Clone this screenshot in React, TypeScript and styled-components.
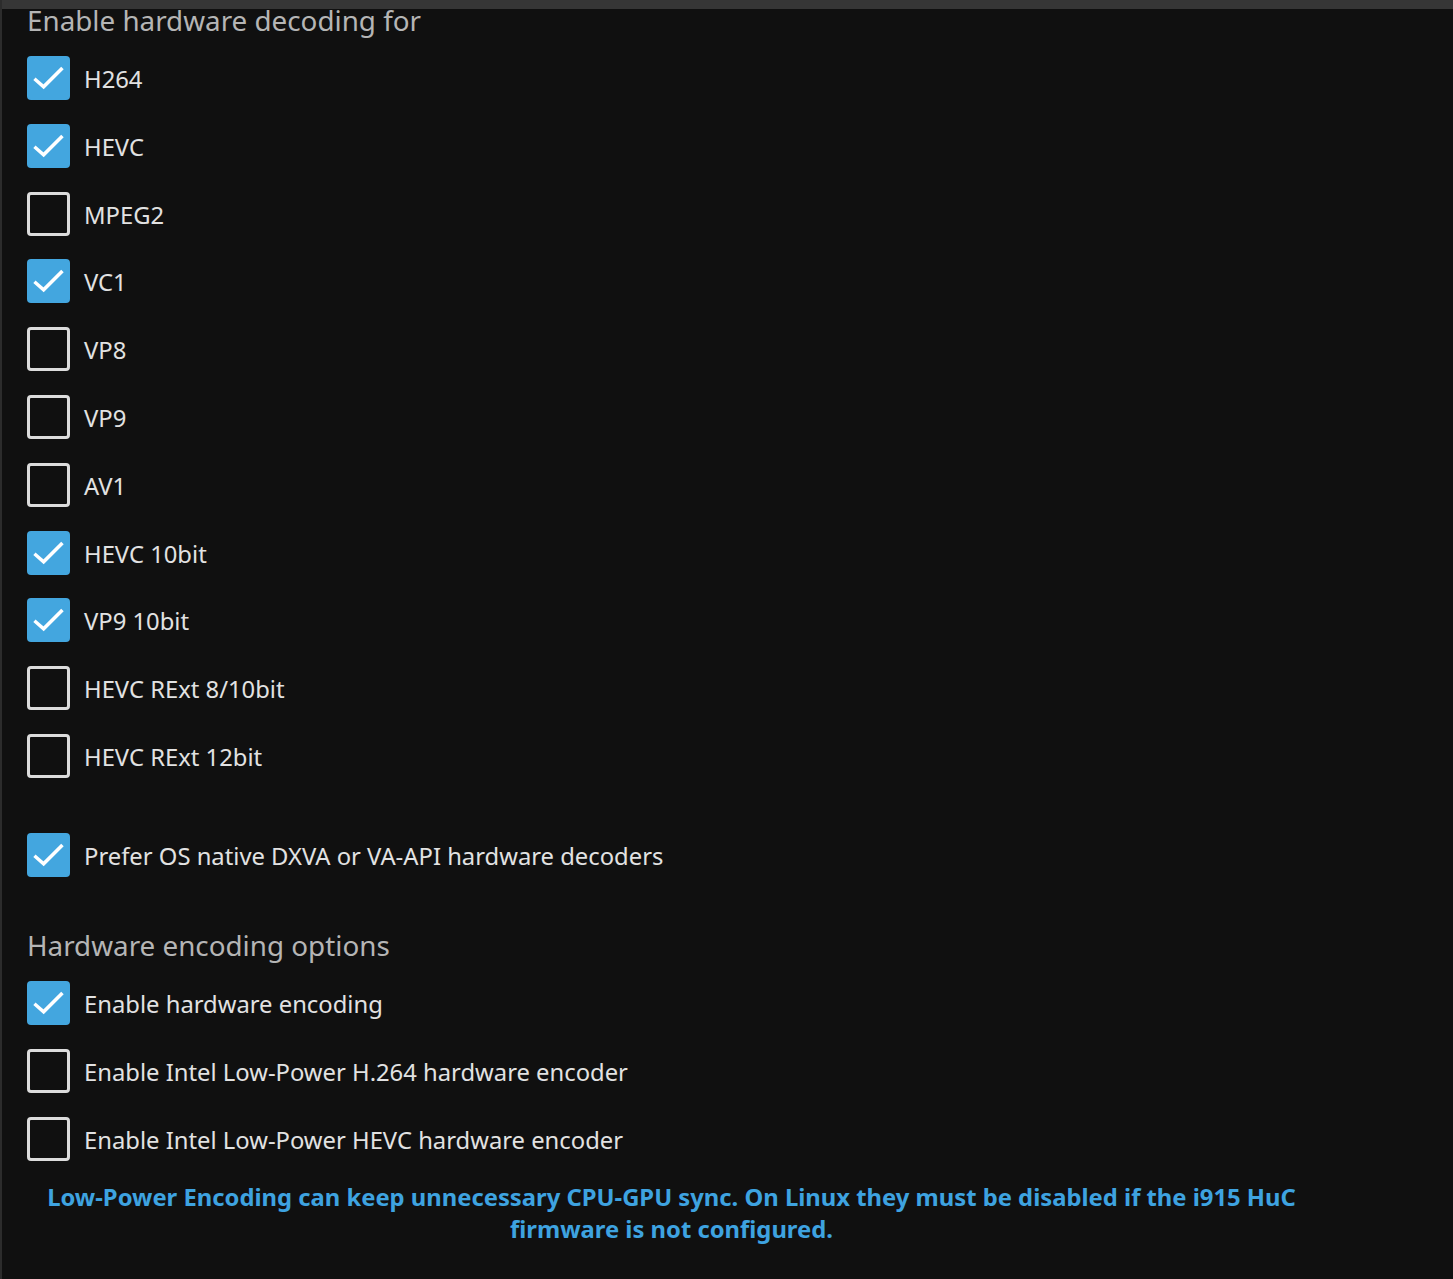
import React from "react";
import styled, { createGlobalStyle } from "styled-components";

const GlobalStyle = createGlobalStyle`
  html, body {
    margin: 0;
    padding: 0;
    background: #101010;
  }
  body {
    font-family: "Noto Sans", "Open Sans", sans-serif;
    color: #e0e0e0;
  }
`;

const Page = styled.div`
  position: relative;
  min-height: 1279px;
  background: #101010;
  border-left: 2px solid #2c2c2c;
  box-sizing: border-box;
`;

const TopBar = styled.div`
  position: absolute;
  top: 0;
  left: 0;
  right: 0;
  height: 9px;
  background: #363636;
  z-index: 2;
`;

const Content = styled.div`
  padding: 2px 0 0 25px;
  display: flex;
  flex-direction: column;
`;

const SectionTitle = styled.h2<{ $mt?: number }>`
  margin: ${(p) => p.$mt ?? 0}px 0 0 0;
  font-size: 27.8px;
  font-weight: 400;
  line-height: 37px;
  color: #b5b5b5;
`;

const List = styled.div<{ $mt?: number }>`
  display: flex;
  flex-direction: column;
  gap: 23.8px;
  margin-top: ${(p) => p.$mt ?? 0}px;
`;

const Row = styled.label`
  display: flex;
  align-items: center;
  gap: 14px;
  height: 44px;
`;

const Box = styled.span<{ $checked: boolean }>`
  width: 43px;
  height: 44px;
  box-sizing: border-box;
  border-radius: 4px;
  flex: none;
  display: flex;
  align-items: center;
  justify-content: center;
  background: ${(p) => (p.$checked ? "#43a6df" : "transparent")};
  border: ${(p) => (p.$checked ? "none" : "3px solid #dcdcdc")};
`;

const Label = styled.span`
  font-size: 23.8px;
  line-height: 32px;
  color: #e2e2e2;
  padding-top: 2px;
`;

const Note = styled.div`
  margin-top: 20px;
  width: 1289px;
  text-align: center;
  font-size: 23.8px;
  font-weight: 700;
  line-height: 32px;
  color: #3ea3e0;
`;

const Check = () => (
  <svg width="44" height="44" viewBox="0 0 44 44" fill="none">
    <path
      d="M9 24 L17 31 L35 13"
      stroke="#ffffff"
      strokeWidth="3.6"
      strokeLinecap="square"
      strokeLinejoin="miter"
    />
  </svg>
);

type Item = { label: string; checked: boolean };

const Checkbox: React.FC<Item> = ({ label, checked }) => (
  <Row>
    <Box $checked={checked}>{checked && <Check />}</Box>
    <Label>{label}</Label>
  </Row>
);

const decoding: Item[] = [
  { label: "H264", checked: true },
  { label: "HEVC", checked: true },
  { label: "MPEG2", checked: false },
  { label: "VC1", checked: true },
  { label: "VP8", checked: false },
  { label: "VP9", checked: false },
  { label: "AV1", checked: false },
  { label: "HEVC 10bit", checked: true },
  { label: "VP9 10bit", checked: true },
  { label: "HEVC RExt 8/10bit", checked: false },
  { label: "HEVC RExt 12bit", checked: false },
];

const encoding: Item[] = [
  { label: "Enable hardware encoding", checked: true },
  { label: "Enable Intel Low-Power H.264 hardware encoder", checked: false },
  { label: "Enable Intel Low-Power HEVC hardware encoder", checked: false },
];

export default function App() {
  return (
    <>
      <GlobalStyle />
      <Page>
        <TopBar />
        <Content>
          <SectionTitle>Enable hardware decoding for</SectionTitle>
          <List $mt={17}>
            {decoding.map((d) => (
              <Checkbox key={d.label} {...d} />
            ))}
          </List>
          <List $mt={55}>
            <Checkbox label="Prefer OS native DXVA or VA-API hardware decoders" checked />
          </List>
          <SectionTitle $mt={50}>Hardware encoding options</SectionTitle>
          <List $mt={17}>
            {encoding.map((d) => (
              <Checkbox key={d.label} {...d} />
            ))}
          </List>
          <Note>
            Low-Power Encoding can keep unnecessary CPU-GPU sync. On Linux they must be disabled if the i915 HuC firmware is not configured.
          </Note>
        </Content>
      </Page>
    </>
  );
}
